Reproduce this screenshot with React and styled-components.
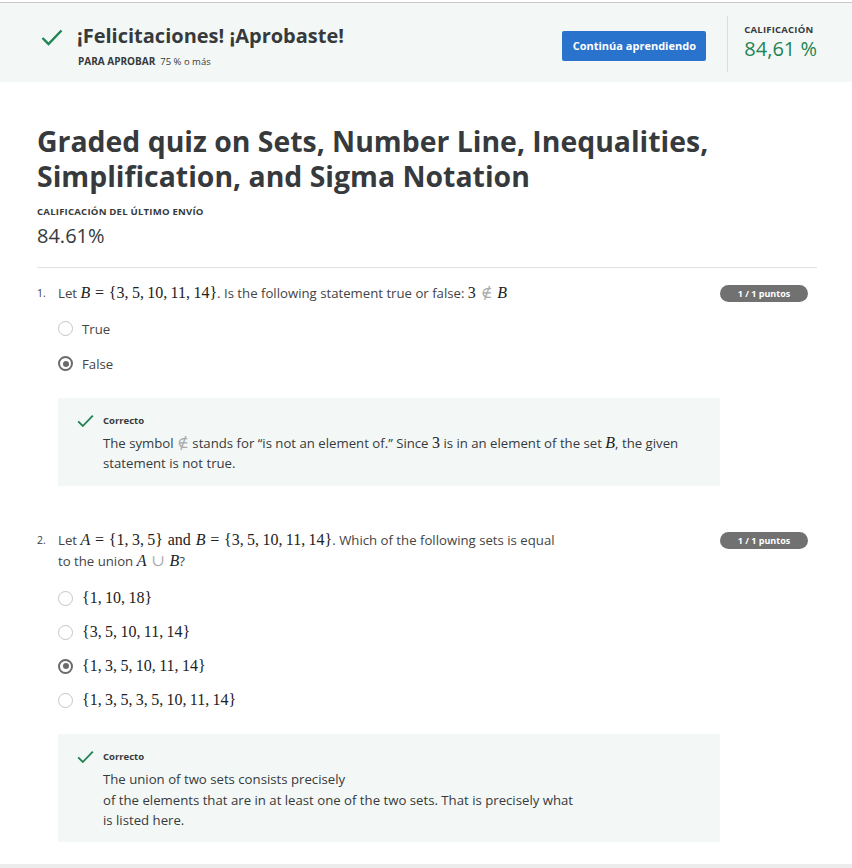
import React from 'react'
import styled, { createGlobalStyle } from 'styled-components'

const GlobalStyle = createGlobalStyle`
  html, body {
    margin: 0;
    padding: 0;
    background: #ffffff;
  }
  body {
    font-family: 'Open Sans', 'Noto Sans', sans-serif;
    color: #373a3c;
  }
`

const Page = styled.div`
  width: 852px;
  min-height: 868px;
  padding-top: 2px;
  box-sizing: border-box;
  display: flex;
  flex-direction: column;
`

/* ---------- banner ---------- */

const Banner = styled.header`
  border-top: 1px solid #c9c9c9;
  background: #f3f8f6;
  height: 80px;
  box-sizing: border-box;
  display: flex;
  align-items: flex-start;
  padding: 0 35px 0 41px;
`
const BannerLeft = styled.div`
  flex: 1;
  display: flex;
  gap: 14px;
  padding-top: 20px;
  & > svg {
    margin-top: 6px;
  }
`
const BannerTitle = styled.h2`
  margin: 0;
  font-size: 20px;
  line-height: 26px;
  font-weight: 700;
  color: #373a3c;
`
const PassLine = styled.p`
  margin: 5px 0 0 1px;
  font-size: 9.5px;
  line-height: 14px;
  color: #373a3c;
  & > b {
    font-size: 10px;
    font-weight: 700;
    margin-right: 5px;
  }
`
const BannerRight = styled.div`
  display: flex;
  align-items: center;
  height: 56px;
  margin-top: 13px;
`
const PrimaryButton = styled.button`
  width: 144px;
  height: 30px;
  margin-top: 3px;
  border: none;
  border-radius: 2px;
  background: #2a73cc;
  color: #ffffff;
  font-family: inherit;
  font-size: 11px;
  font-weight: 700;
  cursor: pointer;
`
const Divider = styled.div`
  width: 1px;
  align-self: stretch;
  background: #dcdcdc;
  margin: 0 16px 0 21px;
`
const GradeBlock = styled.div`
  display: flex;
  flex-direction: column;
  align-self: flex-start;
  margin-top: 7px;
`
const SmallCaps = styled.span`
  font-size: ${p => p.size || 9.5}px;
  line-height: 14px;
  font-weight: 700;
  letter-spacing: 0.2px;
  color: #373a3c;
`
const GradeValue = styled.span`
  font-size: 20px;
  line-height: 24px;
  color: ${p => p.color || '#373a3c'};
`

/* ---------- main ---------- */

const Main = styled.main`
  flex: 1;
  padding: 42px 35px 20px 37px;
`
const QuizTitle = styled.h1`
  margin: 0;
  font-size: 28.4px;
  line-height: 35px;
  font-weight: 700;
  color: #373a3c;
`
const LastGrade = styled.div`
  display: flex;
  flex-direction: column;
  gap: 4px;
  margin-top: 11px;
  & > ${GradeValue} {
    line-height: 26px;
  }
`
const Rule = styled.hr`
  border: none;
  border-top: 1px solid #e1e1e1;
  margin: 18px 0 15px;
`

const Question = styled.section`
  display: grid;
  grid-template-columns: 21px 662px 1fr;
  margin-bottom: ${p => p.last ? 0 : 44}px;
`
const QNumber = styled.span`
  font-size: 10.5px;
  line-height: 21px;
  color: #373a3c;
`
const QBody = styled.div`
  display: flex;
  flex-direction: column;
`
const QText = styled.p`
  margin: 0;
  max-width: 505px;
  font-size: 13.2px;
  line-height: 21px;
  color: #444;
`
const Badge = styled.span`
  justify-self: start;
  margin-top: 1.5px;
  height: 17px;
  width: 88px;
  border-radius: 9px;
  background: #717171;
  color: #ffffff;
  font-size: 9px;
  font-weight: 700;
  display: flex;
  align-items: center;
  justify-content: center;
`
const Options = styled.ul`
  list-style: none;
  margin: ${p => p.mt || 7}px 0 17px;
  padding: 0;
`
const Option = styled.li`
  height: ${p => p.h || 34}px;
  display: flex;
  align-items: center;
  gap: 9px;
  font-size: 13.2px;
  color: #444;
`
const Radio = styled.span`
  position: relative;
  width: 15px;
  height: 15px;
  box-sizing: border-box;
  border-radius: 50%;
  border: ${p => p.checked ? '2px solid #6b6b6b' : '1.5px solid #c6c6c6'};
  background: #fff;
  flex-shrink: 0;
  &::after {
    content: '';
    display: ${p => p.checked ? 'block' : 'none'};
    position: absolute;
    left: 2.5px;
    top: 2.5px;
    width: 6px;
    height: 6px;
    border-radius: 50%;
    background: #6b6b6b;
  }
`

const Feedback = styled.div`
  background: #f3f8f6;
  padding: 15px 20px ${p => p.pb || 13}px 19px;
  display: grid;
  grid-template-columns: 26px 1fr;
  & > svg {
    margin-top: 1px;
  }
`
const FeedbackLabel = styled.span`
  font-size: 9.5px;
  line-height: 16px;
  font-weight: 700;
  color: #373a3c;
`
const FeedbackText = styled.p`
  grid-column: 2;
  margin: 4px 0 0;
  font-size: 13.2px;
  line-height: ${p => p.lh || 20}px;
  color: #373a3c;
`

/* ---------- math ---------- */

const Math = styled.span`
  font-family: 'Liberation Serif', 'DejaVu Serif', serif;
  font-size: 16px;
  line-height: 1;
  white-space: nowrap;
  color: #222;
`
const V = styled.i`
  font-style: italic;
`
const Rel = styled.span`
  margin: 0 ${p => p.tight ? 0 : 0.3}em;
  color: ${p => p.light ? '#aaa' : 'inherit'};
`
const Sep = styled.span`
  margin-right: 0.21em;
`
const Word = styled.span`
  margin: 0 0.3em;
`

const Footer = styled.footer`
  height: 4px;
  background: #ececec;
`

const Check = ({ w = 22, h = 17 }) => (
  <svg width={w} height={h} viewBox="0 0 22 17">
    <polyline points="1.5,9 7.5,15 20.5,1.5" fill="none" stroke="#1f8354" strokeWidth="2.4" />
  </svg>
)

const Set = ({ items }) => (
  <>
    {'{'}
    {items.map((n, i) => (
      <React.Fragment key={i}>
        {n}
        {i < items.length - 1 && <Sep>,</Sep>}
      </React.Fragment>
    ))}
    {'}'}
  </>
)

const options2 = [
  { items: [1, 10, 18] },
  { items: [3, 5, 10, 11, 14] },
  { items: [1, 3, 5, 10, 11, 14], checked: true },
  { items: [1, 3, 5, 3, 5, 10, 11, 14] },
]

export default function App() {
  return (
    <Page>
      <GlobalStyle />
      <Banner>
        <BannerLeft>
          <Check />
          <div>
            <BannerTitle>¡Felicitaciones! ¡Aprobaste!</BannerTitle>
            <PassLine>
              <b>PARA APROBAR</b>75 % o más
            </PassLine>
          </div>
        </BannerLeft>
        <BannerRight>
          <PrimaryButton>Continúa aprendiendo</PrimaryButton>
          <Divider />
          <GradeBlock>
            <SmallCaps>CALIFICACIÓN</SmallCaps>
            <GradeValue color="#1f8354">84,61 %</GradeValue>
          </GradeBlock>
        </BannerRight>
      </Banner>

      <Main>
        <QuizTitle>
          Graded quiz on Sets, Number Line, Inequalities,
          <br />
          Simplification, and Sigma Notation
        </QuizTitle>
        <LastGrade>
          <SmallCaps size={9.6}>CALIFICACIÓN DEL ÚLTIMO ENVÍO</SmallCaps>
          <GradeValue>84.61%</GradeValue>
        </LastGrade>
        <Rule />

        <Question>
          <QNumber>1.</QNumber>
          <QBody>
            <QText>
              Let{' '}
              <Math>
                <V>B</V>
                <Rel>=</Rel>
                <Set items={[3, 5, 10, 11, 14]} />
              </Math>
              . Is the following statement true or false:{' '}
              <Math>
                3<Rel light>∉</Rel>
                <V>B</V>
              </Math>
            </QText>
            <Options>
              <Option h={35}>
                <Radio />
                True
              </Option>
              <Option h={35}>
                <Radio checked />
                False
              </Option>
            </Options>
            <Feedback>
              <Check w={17} h={14} />
              <FeedbackLabel>Correcto</FeedbackLabel>
              <FeedbackText>
                The symbol{' '}
                <Math>
                  <Rel light tight>∉</Rel>
                </Math>{' '}
                stands for “is not an element of.” Since <Math>3</Math> is in an element of the set{' '}
                <Math>
                  <V>B</V>
                </Math>
                , the given statement is not true.
              </FeedbackText>
            </Feedback>
          </QBody>
          <Badge>1 / 1 puntos</Badge>
        </Question>

        <Question last>
          <QNumber>2.</QNumber>
          <QBody>
            <QText>
              Let{' '}
              <Math>
                <V>A</V>
                <Rel>=</Rel>
                <Set items={[1, 3, 5]} />
                <Word>and</Word>
                <V>B</V>
                <Rel>=</Rel>
                <Set items={[3, 5, 10, 11, 14]} />
              </Math>
              . Which of the following sets is equal to the union{' '}
              <Math>
                <V>A</V>
                <Rel light>∪</Rel>
                <V>B</V>
              </Math>
              ?
            </QText>
            <Options mt={9}>
              {options2.map((o, i) => (
                <Option key={i}>
                  <Radio checked={o.checked} />
                  <Math>
                    <Set items={o.items} />
                  </Math>
                </Option>
              ))}
            </Options>
            <Feedback pb={11}>
              <Check w={17} h={14} />
              <FeedbackLabel>Correcto</FeedbackLabel>
              <FeedbackText lh={20.5}>
                The union of two sets consists precisely
                <br />
                of the elements that are in at least one of the two sets. That is precisely what
                <br />
                is listed here.
              </FeedbackText>
            </Feedback>
          </QBody>
          <Badge>1 / 1 puntos</Badge>
        </Question>
      </Main>
      <Footer />
    </Page>
  )
}
